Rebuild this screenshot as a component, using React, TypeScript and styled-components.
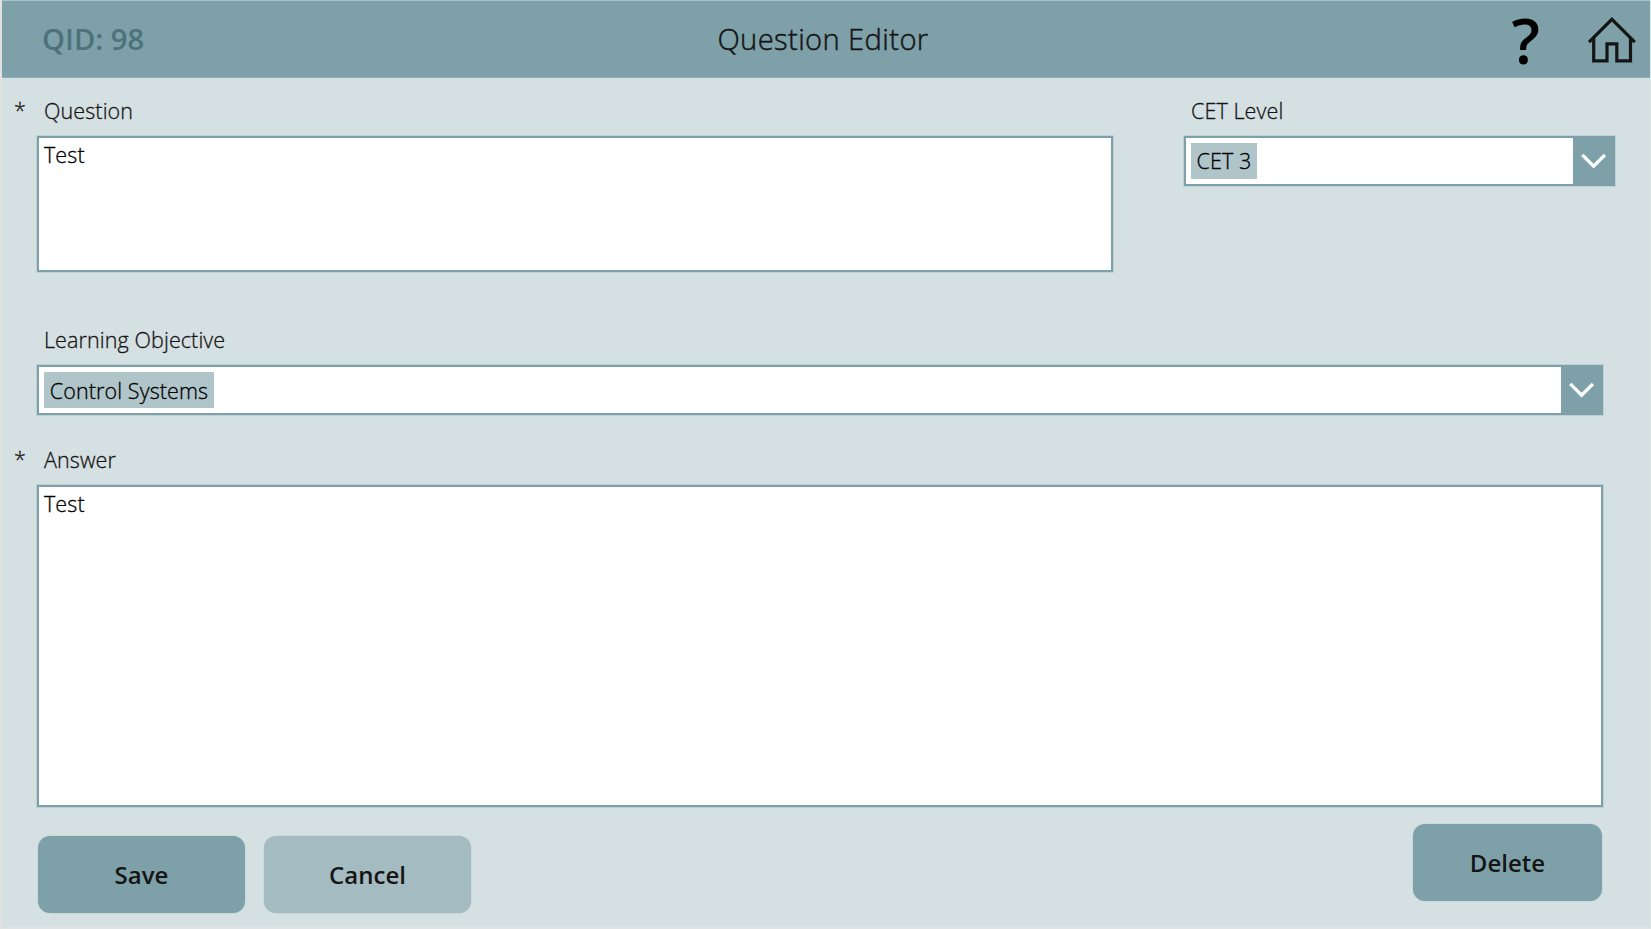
import React from "react";
import styled, { createGlobalStyle } from "styled-components";

const teal = "#7ea1a9";
const tealSoft = "#b0c5ca";

const GlobalStyle = createGlobalStyle`
  *, *::before, *::after { box-sizing: border-box; }
  body { margin: 0; background: #e1e1e1; }
`;

const Screen = styled.main`
  display: flex;
  flex-direction: column;
  width: 1649px;
  height: 928px;
  margin-left: 2px;
  border-right: 1px solid #dbe5e6;
  border-bottom: 1px solid #dfe3e4;
  background: #d5e0e2;
  color: #151515;
  font-family: "Open Sans", "Noto Sans", sans-serif;
  font-size: 21.5px;
  font-weight: 300;
  letter-spacing: 0.1px;
  -webkit-text-stroke-width: 0.3px;
`;

const Header = styled.header`
  display: grid;
  grid-template-columns: 570px 422px 1fr;
  align-items: center;
  height: 78px;
  padding: 0 13px 0 40px;
  border-top: 1px solid #a9c0c5;
  border-bottom: 1px solid #90aeb5;
  background: ${teal};
`;

const RecordId = styled.span`
  color: #4d727a;
  font-size: 29.2px;
  font-weight: 600;
  letter-spacing: 0;
  line-height: 40px;
  -webkit-text-stroke-width: 0;
`;

const Title = styled.h1`
  margin: 0;
  font-size: 29.2px;
  font-weight: 300;
  letter-spacing: 0.36px;
  line-height: 40px;
  text-align: center;
  -webkit-text-stroke-width: 0.45px;
`;

const HeaderActions = styled.div`
  display: flex;
  justify-content: flex-end;
  align-items: center;
  gap: 47px;
`;

const IconButton = styled.button`
  display: flex;
  padding: 0;
  border: 0;
  background: none;
  color: #151515;
  -webkit-text-stroke-width: 0;
`;

const HelpMark = styled.span`
  padding-top: 2px;
  color: #000;
  font: 600 62.5px/74px "Open Sans", sans-serif;
`;

const Form = styled.form`
  display: flex;
  flex-direction: column;
  padding: 18px 47px 0 11px;
`;

const TopRow = styled.div`
  display: flex;
  justify-content: space-between;
  margin-right: -12px;
`;

const Field = styled.div<{ $width: number; $top?: number }>`
  width: ${(p) => p.$width}px;
  margin-top: ${(p) => p.$top ?? 0}px;
`;

const Label = styled.label<{ $inset: number }>`
  display: flex;
  height: 40px;
  padding-left: ${(p) => p.$inset}px;
  line-height: 30px;
`;

const Required = styled.span`
  width: 30px;
  margin-left: -30px;
`;

const TextArea = styled.textarea<{ $height: number }>`
  display: block;
  width: calc(100% - 24px);
  height: ${(p) => p.$height}px;
  margin: 0 0 0 24px;
  padding: 2px 5px;
  border: 2px solid ${teal};
  border-radius: 0;
  outline: 0;
  box-shadow: 0 0 0 1px #bed0d4;
  resize: none;
  background: #fff;
  color: #000;
  font: inherit;
  letter-spacing: inherit;
  line-height: 30px;
`;

const Select = styled.div<{ $height: number; $inset: number }>`
  display: flex;
  justify-content: space-between;
  align-items: stretch;
  height: ${(p) => p.$height}px;
  margin-left: ${(p) => p.$inset}px;
  padding-left: 5px;
  border: 2px solid ${teal};
  box-shadow: 0 0 0 1px #bed0d4;
  background: #fff;
`;

const Tag = styled.span<{ $width: number; $line: number }>`
  align-self: flex-start;
  width: ${(p) => p.$width}px;
  height: 36px;
  margin-top: 5px;
  background: ${tealSoft};
  color: #000;
  line-height: ${(p) => p.$line}px;
  text-align: center;
  white-space: nowrap;
`;

const Arrow = styled.span`
  display: flex;
  justify-content: center;
  align-items: center;
  width: 40px;
  background: ${teal};
`;

const Footer = styled.footer`
  display: flex;
  align-items: flex-end;
  gap: 19px;
  margin-top: 17px;
  padding-left: 25px;
  padding-right: 1px;
`;

const Button = styled.button<{ $variant?: "soft" | "raised" }>`
  width: ${(p) => (p.$variant === "raised" ? 189 : 207)}px;
  height: 77px;
  margin: ${(p) => (p.$variant === "raised" ? "0 0 12px auto" : "0")};
  padding: 0;
  border: 0;
  border-radius: 12px;
  box-shadow: 0 0 0 0.5px #bed0d4;
  background: ${(p) => (p.$variant === "soft" ? "#a3bbc1" : teal)};
  color: #151515;
  font: 600 24px/34px "Open Sans", sans-serif;
  -webkit-text-stroke-width: 0;
`;

const HomeIcon = () => (
  <svg width="50" height="48" viewBox="0 0 50 48" fill="none" stroke="currentColor" strokeWidth="3.2">
    <path d="M2 27.2 24.9 4.3 47.8 27.2" />
    <path d="M6.7 23V45.8H20V28.9H29.8V45.8H43.5V23" />
  </svg>
);

const Chevron = () => (
  <svg width="26" height="16" viewBox="0 0 26 16" fill="none" stroke="#fff" strokeWidth="3.4">
    <path d="M2.3 1.9 13.6 13.1 24.9 1.9" />
  </svg>
);

export default function App() {
  return (
    <>
      <GlobalStyle />
      <Screen>
        <Header>
          <RecordId>QID: 98</RecordId>
          <Title>Question Editor</Title>
          <HeaderActions>
            <IconButton aria-label="Help">
              <HelpMark>?</HelpMark>
            </IconButton>
            <IconButton aria-label="Home">
              <HomeIcon />
            </IconButton>
          </HeaderActions>
        </Header>
        <Form onSubmit={(e) => e.preventDefault()}>
          <TopRow>
            <Field $width={1100}>
              <Label $inset={31}>
                <Required>*</Required>Question
              </Label>
              <TextArea $height={136} defaultValue="Test" spellCheck={false} />
            </Field>
            <Field $width={431}>
              <Label $inset={7}>CET Level</Label>
              <Select $height={50} $inset={0}>
                <Tag $width={66} $line={36}>CET 3</Tag>
                <Arrow>
                  <Chevron />
                </Arrow>
              </Select>
            </Field>
          </TopRow>
          <Field $width={1590} $top={53}>
            <Label $inset={31}>Learning Objective</Label>
            <Select $height={50} $inset={24}>
              <Tag $width={170} $line={37}>Control Systems</Tag>
              <Arrow>
                <Chevron />
              </Arrow>
            </Select>
          </Field>
          <Field $width={1590} $top={30}>
            <Label $inset={31}>
              <Required>*</Required>Answer
            </Label>
            <TextArea $height={322} defaultValue="Test" spellCheck={false} />
          </Field>
          <Footer>
            <Button>Save</Button>
            <Button $variant="soft">Cancel</Button>
            <Button $variant="raised">Delete</Button>
          </Footer>
        </Form>
      </Screen>
    </>
  );
}
